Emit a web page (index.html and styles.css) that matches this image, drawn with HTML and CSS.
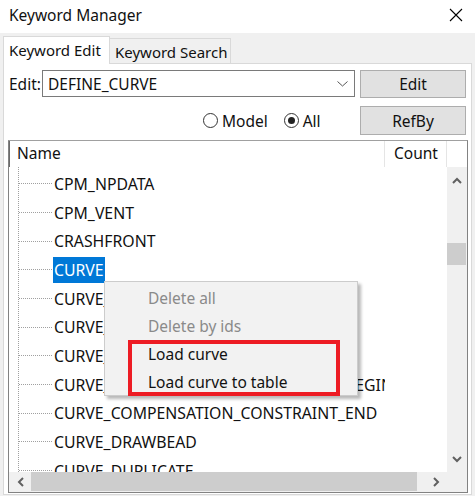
FILE: index.html
```html
<!DOCTYPE html>
<html>
<head>
<meta charset="utf-8">
<link rel="stylesheet" href="styles.css">
</head>
<body>
<div class="window">
  <div class="titlebar">
    <span class="title">Keyword Manager</span>
    <svg class="close" width="14" height="14" viewBox="0 0 14 14"><path d="M1 1L13 13M13 1L1 13" stroke="#000" stroke-width="1.1" fill="none"/></svg>
  </div>
  <div class="tabs">
    <div class="tab active">Keyword Edit</div>
    <div class="tab inactive">Keyword Search</div>
  </div>
  <div class="panel">
    <div class="row1">
      <span class="label">Edit:</span>
      <div class="combo">
        <span class="combo-text">DEFINE_CURVE</span>
        <svg class="chev" width="11" height="6" viewBox="0 0 11 6"><path d="M0.5 0.5L5.5 5L10.5 0.5" stroke="#555" stroke-width="1" fill="none"/></svg>
      </div>
      <div class="btn btn-edit">Edit</div>
    </div>
    <div class="row2">
      <div class="radios">
        <span class="radio"></span><span class="rlabel">Model</span>
        <span class="radio checked"></span><span class="rlabel">All</span>
      </div>
      <div class="btn btn-refby">RefBy</div>
    </div>
    <div class="tree">
      <div class="thead">
        <div class="th th-name">Name</div>
        <div class="th th-count">Count</div>
        <div class="th th-blank"></div>
      </div>
      <div class="tbody">
        <div class="namecol">
          <div class="trow"><span class="conn"></span><span class="item">CPM_NPDATA</span></div>
          <div class="trow"><span class="conn"></span><span class="item">CPM_VENT</span></div>
          <div class="trow"><span class="conn"></span><span class="item">CRASHFRONT</span></div>
          <div class="trow"><span class="conn"></span><span class="item selected">CURVE</span></div>
          <div class="trow"><span class="conn"></span><span class="item">CURVE_ADD_AXIAL</span></div>
          <div class="trow"><span class="conn"></span><span class="item">CURVE_BOX_ADAPTIVITY</span></div>
          <div class="trow"><span class="conn"></span><span class="item">CURVE_COMPENSATION</span></div>
          <div class="trow"><span class="conn"></span><span class="item">CURVE_COMPENSATION_CONSTRAINT_BEGIN</span></div>
          <div class="trow"><span class="conn"></span><span class="item">CURVE_COMPENSATION_CONSTRAINT_END</span></div>
          <div class="trow"><span class="conn"></span><span class="item">CURVE_DRAWBEAD</span></div>
          <div class="trow"><span class="conn"></span><span class="item">CURVE_DUPLICATE</span></div>
        </div>
        <div class="countcol"></div>
        <div class="vscroll">
          <div class="sbtn sbtn-up"><svg width="10" height="7" viewBox="0 0 10 7"><path d="M1 6L5 2L9 6" stroke="#606060" stroke-width="2" fill="none"/></svg></div>
          <div class="vtrack"><div class="vthumb"></div></div>
          <div class="sbtn sbtn-down"><svg width="10" height="7" viewBox="0 0 10 7"><path d="M1 1L5 5L9 1" stroke="#606060" stroke-width="2" fill="none"/></svg></div>
        </div>
      </div>
      <div class="hscroll">
        <div class="hbtn"><svg width="7" height="10" viewBox="0 0 7 10"><path d="M6 1L2 5L6 9" stroke="#606060" stroke-width="2" fill="none"/></svg></div>
        <div class="htrack"><div class="hthumb"></div></div>
        <div class="hbtn"><svg width="7" height="10" viewBox="0 0 7 10"><path d="M1 1L5 5L1 9" stroke="#606060" stroke-width="2" fill="none"/></svg></div>
        <div class="corner"></div>
      </div>
    </div>
  </div>
  <div class="menu">
    <div class="mi disabled">Delete all</div>
    <div class="mi disabled">Delete by ids</div>
    <div class="mi">Load curve</div>
    <div class="mi">Load curve to table</div>
  </div>
  <div class="highlight"></div>
</div>
</body>
</html>
```

FILE: styles.css
```css
* { box-sizing: border-box; }
html, body { margin: 0; padding: 0; }
body {
  width: 475px;
  height: 496px;
  overflow: hidden;
  background: #f0f0f0;
  font-family: "Noto Sans", "Liberation Sans", sans-serif;
  font-size: 15.5px;
  color: #111;
}
.window {
  position: relative;
  width: 475px;
  height: 496px;
  background: #f0f0f0;
}
.titlebar {
  height: 33px;
  background: #fff;
  display: flex;
  align-items: center;
  justify-content: space-between;
  padding: 0 12px 3px 9px;
}
.title { line-height: 20px; }
.close { display: block; }

.tabs {
  height: 30px;
  display: flex;
  align-items: flex-end;
  padding-left: 3px;
  font-size: 15px;
}
.tab {
  border: 1px solid #d9d9d9;
  border-bottom: none;
  white-space: nowrap;
}
.tab.active {
  width: 107px;
  height: 28px;
  background: #fff;
  margin-bottom: -1px;
  position: relative;
  z-index: 1;
  padding-left: 5px;
  line-height: 26px;
}
.tab.inactive {
  width: 121px;
  height: 25px;
  background: #f0f0f0;
  border-left: none;
  padding-left: 5px;
  line-height: 27px;
}

.panel {
  margin: 0 3px;
  height: 432px;
  border: 1px solid #d9d9d9;
  background: #fff;
  padding: 6px 5px 0 5px;
}
.row1 {
  display: flex;
  align-items: center;
  height: 28px;
}
.label { width: 33px; line-height: 20px; }
.combo {
  width: 313px;
  height: 27px;
  border: 1px solid #7a7a7a;
  display: flex;
  align-items: center;
  justify-content: space-between;
  padding: 0 6px 0 5px;
  align-self: flex-start;
}
.combo-text { line-height: 20px; }
.chev { display: block; }
.btn {
  width: 106px;
  background: #e1e1e1;
  border: 1px solid #adadad;
  display: flex;
  align-items: center;
  justify-content: center;
  line-height: 20px;
}
.btn-edit { height: 28px; margin-left: 5px; }
.row2 {
  display: flex;
  align-items: center;
  margin-top: 8px;
  height: 29px;
}
.radios {
  display: flex;
  align-items: center;
  margin-left: 194px;
}
.radio {
  width: 15px;
  height: 15px;
  border: 1px solid #333;
  border-radius: 50%;
  margin-right: 4px;
  display: flex;
  align-items: center;
  justify-content: center;
}
.radio.checked { margin-left: 16px; }
.radio.checked::after {
  content: "";
  width: 7px;
  height: 7px;
  border-radius: 50%;
  background: #222;
}
.rlabel { line-height: 20px; }
.btn-refby { height: 29px; margin-left: auto; }

.tree {
  margin: 5px -2px 0 -1px;
  width: 460px;
  height: 353px;
  border: 1px solid #828282;
  border-top-color: #a0a0a0;
  background: #fff;
  display: flex;
  flex-direction: column;
}
.thead {
  height: 26px;
  display: flex;
  flex-shrink: 0;
}
.th { height: 26px; line-height: 24px; }
.th-name {
  width: 376px;
  padding-left: 7px;
  border-left: 1px solid #6a6a6a;
  border-right: 1px solid #e5e5e5;
}
.th-count {
  width: 62px;
  padding-left: 9px;
  border-right: 1px solid #e5e5e5;
}
.th-blank { flex: 1; }

.tbody {
  height: 305px;
  display: flex;
  flex-shrink: 0;
}
.namecol {
  width: 376px;
  overflow: hidden;
  padding-top: 2.67px;
  background-image: repeating-linear-gradient(to bottom, #a0a0a0 0 1px, transparent 1px 2px);
  background-size: 1px 100%;
  background-position: 9px 0;
  background-repeat: no-repeat;
}
.trow {
  height: 28.667px;
  display: flex;
  align-items: center;
  padding-left: 10px;
  white-space: nowrap;
}
.conn {
  flex-shrink: 0;
  width: 34px;
  height: 1px;
  background-image: repeating-linear-gradient(to right, #a0a0a0 0 1px, transparent 1px 2px);
}
.item {
  flex-shrink: 0;
  height: 26px;
  line-height: 26px;
  padding: 0 1px;
  font-size: 15.8px;
}
.item.selected {
  background: #0078d7;
  color: #fff;
}
.countcol { width: 62px; }
.vscroll {
  width: 20px;
  background: #f0f0f0;
  display: flex;
  flex-direction: column;
}
.sbtn {
  display: flex;
  align-items: center;
  justify-content: center;
}
.sbtn svg { display: block; }
.sbtn-up { height: 28px; padding-bottom: 1px; }
.sbtn-down { height: 24px; padding-bottom: 1px; }
.vtrack { flex: 1; }
.vthumb {
  margin-top: 48px;
  height: 22px;
  margin-right: 1px;
  background: #cdcdcd;
}
.hscroll {
  height: 20px;
  display: flex;
  background: #f0f0f0;
  flex-shrink: 0;
}
.hbtn {
  width: 22px;
  display: flex;
  align-items: center;
  justify-content: center;
}
.hbtn svg { display: block; }
.htrack { width: 394px; }
.hthumb {
  width: 386px;
  height: 19px;
  background: #cdcdcd;
}
.corner { flex: 1; background: #f0f0f0; }

.menu {
  position: absolute;
  left: 104px;
  top: 281px;
  width: 254px;
  height: 115px;
  background: #f2f2f2;
  border: 1px solid #cccccc;
  box-shadow: 3px 3px 3px rgba(0, 0, 0, 0.28);
  padding-top: 2px;
  z-index: 5;
}
.mi {
  height: 28px;
  line-height: 28px;
  padding-left: 43px;
  color: #111;
}
.mi.disabled { color: #8a8a8a; }
.highlight {
  position: absolute;
  left: 128px;
  top: 340px;
  width: 212px;
  height: 56px;
  border: 4px solid #ed1c24;
  z-index: 6;
}
```
